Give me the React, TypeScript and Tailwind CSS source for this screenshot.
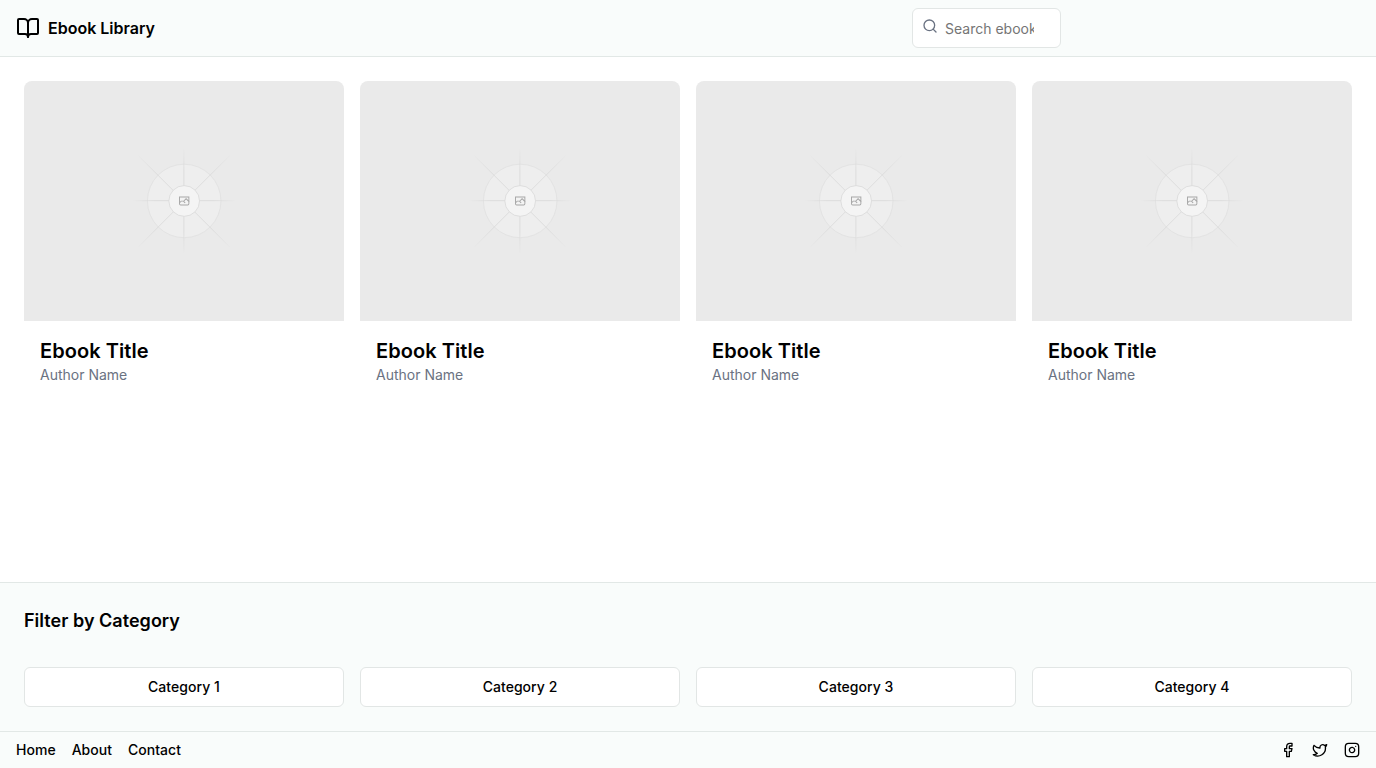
import { BookOpen, Facebook, Instagram, Search, Twitter } from "lucide-react";

function FadeStops() {
  return (
    <>
      <stop stopColor="#C9C9C9" stopOpacity="0" />
      <stop offset=".208" stopColor="#C9C9C9" />
      <stop offset=".792" stopColor="#C9C9C9" />
      <stop offset="1" stopColor="#C9C9C9" stopOpacity="0" />
    </>
  );
}

function CoverPlaceholder({ id }: { id: string }) {
  return (
    <svg
      className="block h-60 w-full rounded-t-lg"
      viewBox="0 0 1200 1200"
      preserveAspectRatio="xMidYMid slice"
      fill="none"
      aria-hidden="true"
    >
      <defs>
        <linearGradient id={`${id}-a`} x1="408" x2="793" y1="600" y2="600" gradientUnits="userSpaceOnUse">
          <FadeStops />
        </linearGradient>
        <linearGradient id={`${id}-b`} x1="600" x2="600" y1="404" y2="797" gradientUnits="userSpaceOnUse">
          <FadeStops />
        </linearGradient>
        <linearGradient id={`${id}-c`} x1="425" x2="775" y1="426" y2="776" gradientUnits="userSpaceOnUse">
          <FadeStops />
        </linearGradient>
        <linearGradient id={`${id}-d`} x1="425" x2="775" y1="776" y2="426" gradientUnits="userSpaceOnUse">
          <FadeStops />
        </linearGradient>
      </defs>
      <rect width="1200" height="1200" fill="#EAEAEA" />
      <g opacity=".5" strokeWidth="3">
        <g opacity=".5">
          <circle cx="600.709" cy="599.88" r="137.8" fill="#FAFAFA" />
          <circle cx="600.709" cy="599.88" r="137.8" stroke="#C9C9C9" />
        </g>
        <path stroke={`url(#${id}-d)`} d="M425 776 775 426" />
        <path stroke={`url(#${id}-a)`} d="M404.846 598.671h391.726" />
        <path stroke={`url(#${id}-b)`} d="M599.5 795.742V404.017" />
        <path stroke={`url(#${id}-c)`} d="M425 426 775 776" />
        <circle cx="600.709" cy="599.88" r="57.5" fill="#fff" />
        <path
          fill="#666"
          fillRule="evenodd"
          clipRule="evenodd"
          d="M616.426 586.58h-31.434v16.176l3.553-3.554.531-.531h9.068l.074-.074 8.463-8.463h2.565l7.18 7.181V586.58Zm-15.715 14.654 3.698 3.699 1.283 1.282-2.565 2.565-1.282-1.283-5.2-5.199h-6.066l-5.514 5.514-.073.073v2.876a2.418 2.418 0 0 0 2.418 2.418h26.598a2.418 2.418 0 0 0 2.418-2.418v-8.317l-8.463-8.463-7.181 7.181-.071.072Zm-19.347 5.442v4.085a6.045 6.045 0 0 0 6.046 6.045h26.598a6.044 6.044 0 0 0 6.045-6.045v-7.108l1.356-1.355-1.282-1.283-.074-.073v-17.989h-38.689v23.43l-.146.146.146.147Z"
        />
        <circle cx="600.709" cy="599.88" r="57.5" stroke="#C9C9C9" />
      </g>
    </svg>
  );
}

const books = [1, 2, 3, 4].map((n) => ({ id: `book-${n}`, title: "Ebook Title", author: "Author Name" }));
const categories = ["Category 1", "Category 2", "Category 3", "Category 4"];
const links = ["Home", "About", "Contact"];

export default function App() {
  return (
    <div className="flex min-h-screen flex-col bg-white font-['Inter',sans-serif] text-black">
      <header className="flex h-[57px] items-center justify-between border-b border-[#e2e8e6] bg-[#f9fcfb] px-4">
        <a href="#" className="flex items-center gap-2 text-base font-semibold">
          <BookOpen className="size-6" />
          <span>Ebook Library</span>
        </a>
        <form className="relative mr-[299px] w-[149px]">
          <Search className="absolute left-2.5 top-2.5 size-4 text-gray-500" />
          <input
            type="search"
            placeholder="Search ebooks..."
            className="block h-10 w-full rounded-md border border-[#e2e6e5] bg-white py-2 pl-8 pr-3 text-sm placeholder:text-[#757575]"
          />
        </form>
      </header>

      <main className="grid flex-1 grid-cols-4 items-start gap-4 p-6">
        {books.map((book) => (
          <article key={book.id}>
            <CoverPlaceholder id={book.id} />
            <div className="p-4">
              <h2 className="text-xl font-semibold tracking-[0.003em]">{book.title}</h2>
              <p className="text-sm text-gray-500">{book.author}</p>
            </div>
          </article>
        ))}
      </main>

      <section className="border-t border-[#e2e8e6] bg-[#f9fcfb] p-6">
        <h2 className="text-lg font-semibold tracking-[0.0015em]">Filter by Category</h2>
        <div className="mt-8 grid grid-cols-4 gap-4">
          {categories.map((category) => (
            <button
              key={category}
              type="button"
              className="h-10 rounded-md border border-[#e2e6e5] bg-white px-4 text-sm font-medium tracking-[0.003em]"
            >
              {category}
            </button>
          ))}
        </div>
      </section>

      <footer className="flex items-center justify-between border-t border-[#e2e8e6] bg-[#f9fcfb] px-4 py-2">
        <nav className="flex gap-4 text-sm font-medium tracking-[0.002em]">
          {links.map((link) => (
            <a key={link} href="#">
              {link}
            </a>
          ))}
        </nav>
        <div className="flex gap-4">
          <Facebook className="size-4" />
          <Twitter className="size-4" />
          <Instagram className="size-4" />
        </div>
      </footer>
    </div>
  );
}
